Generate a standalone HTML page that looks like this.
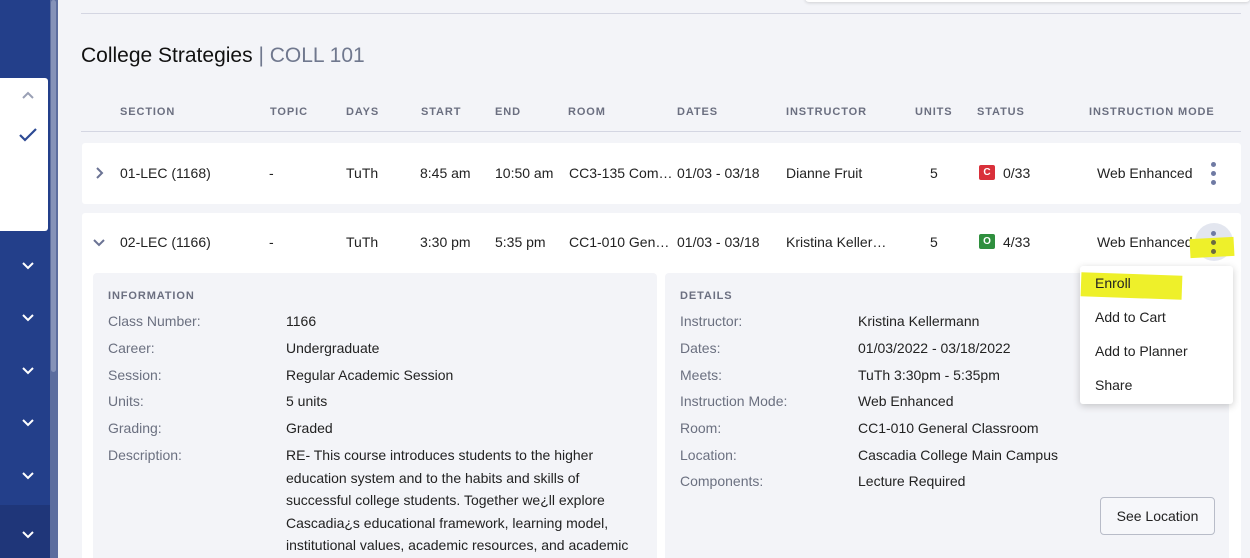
<!DOCTYPE html>
<html><head><style>
*{margin:0;padding:0;box-sizing:border-box}
html,body{width:1250px;height:558px;overflow:hidden}
body{background:#f3f4f8;font-family:"Liberation Sans",sans-serif;color:#222;position:relative;font-size:14px}
.a{position:absolute;white-space:nowrap}
.h{font-size:11px;font-weight:bold;letter-spacing:0.9px;color:#6b6f80;top:106px}
.lab{color:#6b7080}
.chev{position:absolute;left:21px;width:14px;height:10px}
</style></head><body>
<div class="a" style="left:0;top:0;width:50px;height:558px;background:#233f8a"></div>
<div class="a" style="left:0;top:505px;width:50px;height:53px;background:#1f3679"></div>
<div class="a" style="left:50px;top:0;width:8px;height:558px;background:#5c6d9e"></div>
<div class="a" style="left:51px;top:0;width:5px;height:372px;background:#8592b8;border-radius:3px"></div>
<div class="a" style="left:0;top:78px;width:48px;height:153px;background:#fff;border-radius:0 3px 3px 0"></div>
<svg class="a" style="left:21px;top:91px" width="14" height="10" viewBox="0 0 14 10"><path d="M2 7 L7 2 L12 7" stroke="#9aa0b5" stroke-width="2" fill="none"/></svg>
<svg class="a" style="left:18px;top:127px" width="20" height="16" viewBox="0 0 20 16"><path d="M2 8 L7 13 L18 2" stroke="#2d4a94" stroke-width="2.2" fill="none"/></svg>
<svg class="chev" style="top:260px" viewBox="0 0 14 10"><path d="M2 3 L7 8 L12 3" stroke="#fff" stroke-width="2" fill="none"/></svg>
<svg class="chev" style="top:312px" viewBox="0 0 14 10"><path d="M2 3 L7 8 L12 3" stroke="#fff" stroke-width="2" fill="none"/></svg>
<svg class="chev" style="top:365px" viewBox="0 0 14 10"><path d="M2 3 L7 8 L12 3" stroke="#fff" stroke-width="2" fill="none"/></svg>
<svg class="chev" style="top:417px" viewBox="0 0 14 10"><path d="M2 3 L7 8 L12 3" stroke="#fff" stroke-width="2" fill="none"/></svg>
<svg class="chev" style="top:470px" viewBox="0 0 14 10"><path d="M2 3 L7 8 L12 3" stroke="#fff" stroke-width="2" fill="none"/></svg>
<svg class="chev" style="top:529px" viewBox="0 0 14 10"><path d="M2 3 L7 8 L12 3" stroke="#fff" stroke-width="2" fill="none"/></svg>
<div class="a" style="left:805px;top:-4px;width:445px;height:6px;background:#fff;border-radius:0 0 4px 4px;box-shadow:0 1px 3px rgba(0,0,0,.15)"></div>
<div class="a" style="left:81px;top:13px;width:1160px;height:1px;background:#d4d6e2"></div>
<div class="a" style="left:81px;top:44px;font-size:21px;color:#111">College Strategies <span style="color:#70788e">| COLL 101</span></div>
<div class="a h" style="left:120px">SECTION</div>
<div class="a h" style="left:270px">TOPIC</div>
<div class="a h" style="left:346px">DAYS</div>
<div class="a h" style="left:421px">START</div>
<div class="a h" style="left:495px">END</div>
<div class="a h" style="left:568px">ROOM</div>
<div class="a h" style="left:677px">DATES</div>
<div class="a h" style="left:786px">INSTRUCTOR</div>
<div class="a h" style="left:915px">UNITS</div>
<div class="a h" style="left:977px">STATUS</div>
<div class="a h" style="left:1089px">INSTRUCTION MODE</div>
<div class="a" style="left:81px;top:131px;width:1160px;height:1px;background:#d4d6e2"></div>
<div class="a" style="left:82px;top:143px;width:1159px;height:61px;background:#fff;border-radius:3px"></div>
<svg class="a" style="left:94px;top:166px" width="12" height="14" viewBox="0 0 12 14"><path d="M3 2 L8 7 L3 12" stroke="#6b7394" stroke-width="2" fill="none"/></svg>
<div class="a" style="left:120px;top:165px">01-LEC (1168)</div>
<div class="a" style="left:269px;top:165px">-</div>
<div class="a" style="left:346px;top:165px">TuTh</div>
<div class="a" style="left:420px;top:165px">8:45 am</div>
<div class="a" style="left:495px;top:165px">10:50 am</div>
<div class="a" style="left:569px;top:165px">CC3-135 Com…</div>
<div class="a" style="left:677px;top:165px">01/03 - 03/18</div>
<div class="a" style="left:786px;top:165px">Dianne Fruit</div>
<div class="a" style="left:930px;top:165px">5</div>
<div class="a" style="left:979px;top:165px;width:16px;height:15px;background:#d9303a;color:#fff;font-size:10px;font-weight:bold;text-align:center;line-height:15px;border-radius:2px">C</div>
<div class="a" style="left:1003px;top:165px">0/33</div>
<div class="a" style="left:1097px;top:165px">Web Enhanced</div>
<div class="a" style="left:1211px;top:162px;width:5px;height:5px;border-radius:50%;background:#6f7aa3"></div>
<div class="a" style="left:1211px;top:171px;width:5px;height:5px;border-radius:50%;background:#6f7aa3"></div>
<div class="a" style="left:1211px;top:180px;width:5px;height:5px;border-radius:50%;background:#6f7aa3"></div>
<div class="a" style="left:82px;top:213px;width:1159px;height:350px;background:#fff;border-radius:3px"></div>
<svg class="a" style="left:92px;top:237px" width="14" height="12" viewBox="0 0 14 12"><path d="M2 3 L7 8 L12 3" stroke="#6b7394" stroke-width="2" fill="none"/></svg>
<div class="a" style="left:120px;top:234px">02-LEC (1166)</div>
<div class="a" style="left:269px;top:234px">-</div>
<div class="a" style="left:346px;top:234px">TuTh</div>
<div class="a" style="left:420px;top:234px">3:30 pm</div>
<div class="a" style="left:495px;top:234px">5:35 pm</div>
<div class="a" style="left:569px;top:234px">CC1-010 Gen…</div>
<div class="a" style="left:677px;top:234px">01/03 - 03/18</div>
<div class="a" style="left:786px;top:234px">Kristina Keller…</div>
<div class="a" style="left:930px;top:234px">5</div>
<div class="a" style="left:979px;top:234px;width:16px;height:15px;background:#2f8f3e;color:#fff;font-size:10px;font-weight:bold;text-align:center;line-height:15px;border-radius:2px">O</div>
<div class="a" style="left:1003px;top:234px">4/33</div>
<div class="a" style="left:1097px;top:234px">Web Enhanced</div>
<div class="a" style="left:1195px;top:223px;width:38px;height:38px;border-radius:50%;background:#e3e6ef"></div>
<div class="a" style="left:1190px;top:238px;width:44px;height:19px;background:#eef02a;transform:rotate(-3deg)"></div>
<div class="a" style="left:1211px;top:231px;width:5px;height:5px;border-radius:50%;background:#6f7aa3"></div>
<div class="a" style="left:1211px;top:240px;width:5px;height:5px;border-radius:50%;background:#6b6a40"></div>
<div class="a" style="left:1211px;top:249px;width:5px;height:5px;border-radius:50%;background:#6b6a40"></div>
<div class="a" style="left:93px;top:273px;width:564px;height:300px;background:#f3f4f8;border-radius:4px"></div>
<div class="a" style="left:665px;top:273px;width:564px;height:300px;background:#f3f4f8;border-radius:4px"></div>
<div class="a" style="left:108px;top:290px;font-size:11px;font-weight:bold;letter-spacing:0.9px;color:#6b6f80">INFORMATION</div>
<div class="a lab" style="left:108px;top:313px">Class Number:</div><div class="a" style="left:286px;top:313px">1166</div>
<div class="a lab" style="left:108px;top:340px">Career:</div><div class="a" style="left:286px;top:340px">Undergraduate</div>
<div class="a lab" style="left:108px;top:367px">Session:</div><div class="a" style="left:286px;top:367px">Regular Academic Session</div>
<div class="a lab" style="left:108px;top:393px">Units:</div><div class="a" style="left:286px;top:393px">5 units</div>
<div class="a lab" style="left:108px;top:420px">Grading:</div><div class="a" style="left:286px;top:420px">Graded</div>
<div class="a lab" style="left:108px;top:447px">Description:</div>
<div class="a" style="left:286px;top:444px;line-height:22.5px">RE- This course introduces students to the higher<br>education system and to the habits and skills of<br>successful college students. Together we¿ll explore<br>Cascadia¿s educational framework, learning model,<br>institutional values, academic resources, and academic</div>
<div class="a" style="left:680px;top:290px;font-size:11px;font-weight:bold;letter-spacing:0.9px;color:#6b6f80">DETAILS</div>
<div class="a lab" style="left:680px;top:313px">Instructor:</div><div class="a" style="left:858px;top:313px">Kristina Kellermann</div>
<div class="a lab" style="left:680px;top:340px">Dates:</div><div class="a" style="left:858px;top:340px">01/03/2022 - 03/18/2022</div>
<div class="a lab" style="left:680px;top:367px">Meets:</div><div class="a" style="left:858px;top:367px">TuTh 3:30pm - 5:35pm</div>
<div class="a lab" style="left:680px;top:393px">Instruction Mode:</div><div class="a" style="left:858px;top:393px">Web Enhanced</div>
<div class="a lab" style="left:680px;top:420px">Room:</div><div class="a" style="left:858px;top:420px">CC1-010 General Classroom</div>
<div class="a lab" style="left:680px;top:447px">Location:</div><div class="a" style="left:858px;top:447px">Cascadia College Main Campus</div>
<div class="a lab" style="left:680px;top:473px">Components:</div><div class="a" style="left:858px;top:473px">Lecture Required</div>
<div class="a" style="left:1100px;top:497px;width:115px;height:38px;border:1px solid #b8bcc8;border-radius:4px;background:#f6f7fa;text-align:center;line-height:36px">See Location</div>
<div class="a" style="left:1080px;top:266px;width:153px;height:138px;background:#fff;border-radius:3px;box-shadow:0 2px 8px rgba(0,0,0,.2)"></div>
<div class="a" style="left:1081px;top:274px;width:101px;height:24px;background:#eef02a;transform:rotate(2deg)"></div>
<div class="a" style="left:1095px;top:275px">Enroll</div>
<div class="a" style="left:1095px;top:309px">Add to Cart</div>
<div class="a" style="left:1095px;top:343px">Add to Planner</div>
<div class="a" style="left:1095px;top:377px">Share</div>
</body></html>
